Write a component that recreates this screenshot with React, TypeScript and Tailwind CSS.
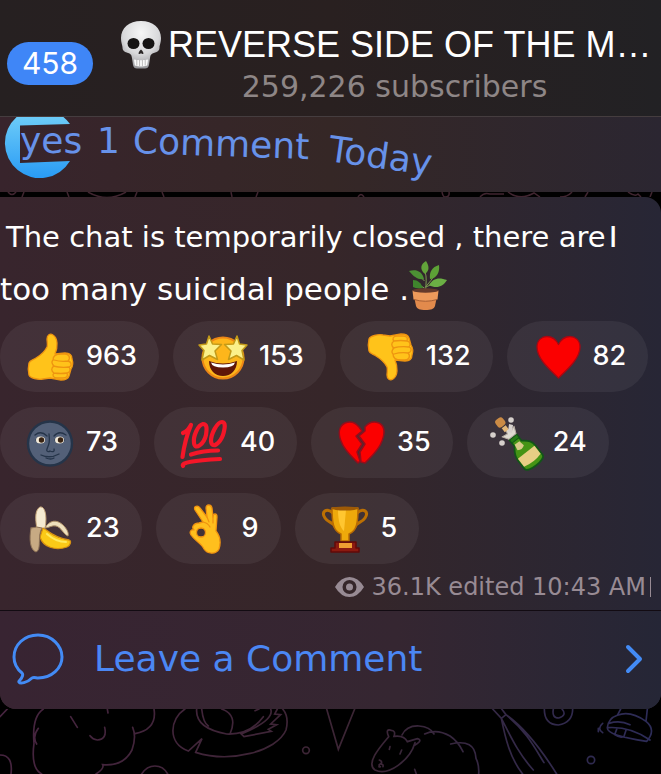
import type { ReactNode } from "react";

function Art({ children }: { children: ReactNode }) {
  return (
    <svg viewBox="0 0 48 48" className="size-12 shrink-0 overflow-visible" aria-hidden="true" strokeLinecap="round" strokeLinejoin="round">
      {children}
    </svg>
  );
}

function Skull() {
  return (
    <svg viewBox="0 0 42 48" className="h-12 w-[42px] shrink-0" aria-hidden="true">
      <defs>
        <radialGradient id="bone" cx="0.5" cy="0.25" r="0.75">
          <stop offset="0" stopColor="#f6f6f6" />
          <stop offset="0.6" stopColor="#d8d8da" />
          <stop offset="1" stopColor="#96969a" />
        </radialGradient>
      </defs>
      <path d="M21 0C9 0 1 7 1 17c0 5 1.500 7 1.500 9.500C2.500 30 5 31 8 32c3 .8 3.500 2 4 5l1 7c.4 2.500 2 3.500 4 3.500h8c2 0 3.600-1 4-3.500l1-7c.5-3 1-4.200 4-5 3-1 5.500-2 5.500-5.500C39.500 24 41 22 41 17 41 7 33 0 21 0Z" fill="url(#bone)" />
      <ellipse cx="13.500" cy="22.500" rx="6" ry="5.600" fill="#161414" />
      <ellipse cx="28.500" cy="22.500" rx="6" ry="5.600" fill="#161414" />
      <path d="M21 28.500c-2 1.500-3 4-2.200 4.500.8.400 1.200-.6 2.200-.6s1.400 1 2.200.6c.8-.5-.2-3-2.200-4.500Z" fill="#2a2626" />
      <path d="M14 38.500q7 1.500 14 0l-.8 6q-6.200 2-12.400 0Z" fill="#fafafa" />
      <path d="M16.800 38.500v6M19.600 39v6M22.400 39v6M25.200 38.500v6" stroke="#a5a2a2" strokeWidth="0.700" />
    </svg>
  );
}

function Plant() {
  return (
    <svg viewBox="0 0 38 49" className="mb-2 h-[49px] w-[38px] shrink-0" aria-hidden="true">
      <path d="M16.500 30C17 22 18 17 16 10M16.500 26Q22 20 27 12M17 26Q23 22 30 22M15.500 20Q10 14 6 11M15.500 27Q10 24 6 22" stroke="#7c9a52" strokeWidth="1" fill="none" />
      <path d="M16 13C10 8 12 3 17 0c3 5 4 9-1 13Z" fill="#62a33a" />
      <path d="M15 18C9 19 5 16 0 10c7-2 13 0 15 8Z" fill="#4c9134" />
      <path d="M21 18c-1-7 2-12 9-14 1 7-2 13-9 14Z" fill="#5da136" />
      <path d="M20 24c4-7 10-8 18-5-4 7-11 9-18 5Z" fill="#6bb044" />
      <path d="M14 27c-4 1-8 0-10-1v-7c5 0 8 3 10 8Z" fill="#3f852d" />
      <path d="M5 35h23l-2 10c-1 3-4 4-9.500 4S8 48 7 45Z" fill="#e28a4c" />
      <path d="M3.500 29.500h26l-1 9q-12 3.500-24 0Z" fill="#ee9a5b" />
      <ellipse cx="16.500" cy="29.500" rx="13" ry="2.200" fill="#653a2b" />
      <path d="M5 38.500q11.500 3.500 23 0" stroke="#a75f35" fill="none" />
    </svg>
  );
}

function HandShape() {
  return (
    <>
      <path d="M3 30c1-3 4-3 7-5 5-3 9-7 11-11 1-3 0-5 0-8 0-4 3-6 6-4 5 3 5 12 2 19l10-1c5 0 7 2 7 6 1 3 1 7-1 10l-2 7c-1 3-4 4-8 4l-11-2-7 1c-5 1-13-1-14-4-1-4-1-8 0-12Z" fill="#ffc31a" stroke="#ee9410" strokeWidth="1.300" />
      <path d="M27 27c0-4 3-6 8-6h4c4 0 6 4 3 7 4 1 4 5 1 6 2 2 1 6-2 6 1 3 0 5-4 5H31c-4 0-5-3-3-5-3-2-3-5 0-7-2-2-3-4-1-6ZM28 27q7 2 14 1M27 33q8 2 16 1M28 40q7 1 13 0" fill="none" stroke="#ee9410" strokeWidth="1.300" />
    </>
  );
}

const ThumbUp = () => (
  <Art>
    <HandShape />
  </Art>
);

const ThumbDown = () => (
  <Art>
    <g transform="translate(0 48) scale(1 -1)">
      <HandShape />
    </g>
  </Art>
);

const StarStruck = () => (
  <Art>
    <circle cx="24" cy="25" r="20.500" fill="#fdb61b" stroke="#ec8616" strokeWidth="2" />
    <path d="M10 28q14 5 28 0c0 9-6 15-14 15s-14-6-14-15Z" fill="#5f1608" />
    <path d="M12 29.500q12 4 24 0-1 5-12 5t-12-5Z" fill="#fff" />
    <path d="M10 3l3.500 8 9 .5-6.500 6.500 2.500 8.500-8-4-7.500 4.500L5 17.500 0 12l7.500-1ZM38 3l-3.500 8-9 .5L32 18l-2.500 8.500 8-4 7.500 4.500-2-9.500 5-5.500-7.500-1Z" fill="#fbf08a" stroke="#c39a18" strokeWidth="1.500" />
  </Art>
);

const Heart = () => (
  <Art>
    <path d="M25.500 45C15 35 4 25 4 14 4 7 9 3.500 14 3.500c5 0 9 3 11.500 8 2.500-5 6.500-8 11.500-8S47 7 47 14c0 11-11 21-21.500 31Z" fill="#fb0000" stroke="#a80712" strokeWidth="1.300" />
  </Art>
);

const Moon = () => (
  <Art>
    <circle cx="24" cy="24.500" r="22" fill="#536078" stroke="#253449" strokeWidth="2.400" />
    <g fill="none" stroke="#253449" strokeWidth="1.300">
      <path d="M9 16q6-5 12 1M28 17q5-6 12-1M23 15c1 8 0 10-2 15-1 3 2 3 3 2 2 1 5 1 4-2M15 36q9 4 18-1M20 39q5 2 8 0M10 21q4-5 8 0M29 21q4-5 9 0" />
    </g>
    <ellipse cx="14.500" cy="21" rx="4.500" ry="3.500" fill="#f2ead9" />
    <ellipse cx="33.500" cy="21" rx="4.500" ry="3.500" fill="#f2ead9" />
    <circle cx="15.500" cy="21" r="2.700" fill="#382313" />
    <circle cx="34.500" cy="21" r="2.700" fill="#382313" />
  </Art>
);

const Hundred = () => (
  <Art>
    <g fill="none" stroke="#f51628" strokeWidth="4.200">
      <path d="M3 14q5-2 8-8Q5 20 2.500 38" />
      <path d="M23 5c-5 1-10 12-9 19 1 8 10 1 12-8 1-7 1-11-3-11Z" />
      <path d="M42 3c-5 0-11 12-11 19 1 9 9 2 12-6 2-7 3-13-1-13Z" />
      <path d="M11 35.500q12-4 27-4" />
      <path d="M3 47q-3-5 37-7" />
    </g>
  </Art>
);

const BrokenHeart = () => (
  <Art>
    <path d="M22 8C18 3 13 2 8 4c-6 3-7 10-4 18 3 9 10 15 17 22l2-2-3-9 5-8-6-8 6-5Z" fill="#fb0000" stroke="#960d1b" strokeWidth="1.500" />
    <path d="M28 8c4-5 9-6 14-4 6 3 6 10 3 18-3 9-10 15-17 22l-4-1-1-10 5-8-6-8 6-5Z" fill="#fb0000" stroke="#960d1b" strokeWidth="1.500" />
  </Art>
);

const Champagne = () => (
  <Art>
    <g transform="rotate(-38 24 24)">
      <path d="M20 17h9v8c6 4 8 7 8 13v11c0 6-23 6-23 0V38c0-6 3-9 6-13Z" fill="#459415" stroke="#125518" strokeWidth="1.800" />
      <path d="M20 17h9v4h-9Z" fill="#267a17" stroke="#125518" />
      <path d="M15 37h21v10q-10 3-21 0Z" fill="#e8ce85" />
      <path d="M21 24h6l1 6q-4 3-8 0Z" fill="#d8ca88" />
      <path d="M20 16l-4-6 6 1 2-6 3 6 5-2-3 7Z" fill="#dedad1" stroke="#b9afa5" />
      <rect x="19" y="-7" width="9" height="9" rx="3" fill="#cb8b45" />
      <path d="M21 3h5v5h-5Z" fill="#e3b878" />
    </g>
    <g fill="#d6d0cc">
      <circle cx="18" cy="1" r="2.800" />
      <circle cx="0" cy="16" r="2.800" />
      <circle cx="9" cy="24" r="2.800" />
      <path d="M15 13l1-8 4 1-1 8Z" />
    </g>
  </Art>
);

const Banana = () => (
  <Art>
    <path d="M11 24C9 13 9 5 14 2c6-1 7 12 5 21Z" fill="#f5ead0" stroke="#c7a77b" />
    <path d="M17 23c5 2 8 9 26 12 3 1 1 6-2 7-12 4-24 0-27-10Z" fill="#fbca17" stroke="#d79111" strokeWidth="1.300" />
    <path d="M5 23q6-2 11 0c-5 8 0 22-6 24C4 45 3 34 5 23Z" fill="#c7aa83" stroke="#8e7357" />
    <path d="M19 23c4-8 12-9 18-3 4 4 6 8 5 11-4-1-7-9-12-10-4-1-7 2-11 2Z" fill="#eee0bd" stroke="#ae9067" />
    <path d="M21 29q9 8 19 8" stroke="#ffea5d" strokeWidth="2" fill="none" />
  </Art>
);

const OkHand = () => (
  <Art>
    <path
      fillRule="evenodd"
      d="M21 17L13 5c-2-4 3-5 5-2l7 9-1-9c0-4 5-4 6 0l1 9c0-4 4-4 4 0l-1 14c4 5 5 12 3 18-3 6-12 5-15 0-3-6-9-8-13-14-2-3 0-6 3-5-3-3 0-7 5-7Zm-2 6a4.500 4.500 0 1 0 0 9 4.500 4.500 0 1 0 0-9Z"
      fill="#ffbf1d"
      stroke="#ef9211"
      strokeWidth="1.300"
    />
    <path d="M25 12l2 5M31 12v6M21 17q5 1 7 5" stroke="#ef9211" strokeWidth="1.200" fill="none" />
  </Art>
);

const Trophy = () => (
  <Art>
    <path d="M12 8C5 2 0 7 4 13c3 5 9 4 10 9M36 8c7-6 12-1 8 5-3 5-9 4-10 9" fill="none" stroke="#bc7003" strokeWidth="3" />
    <path d="M11 3h26c0 14-1 23-9 26v7h-8v-7C12 26 11 17 11 3Z" fill="#eea90b" stroke="#b96b03" strokeWidth="1.500" />
    <path d="M17 5h8l-2 21c-4-3-6-11-6-21Z" fill="#ffc630" />
    <ellipse cx="24" cy="3.500" rx="13" ry="2" fill="#9e5a06" />
    <path d="M14 37h21v6h3v4H10v-4h4Z" fill="#8b1a10" stroke="#610a08" strokeWidth="1.500" />
    <path d="M18 38h13v5H18Z" fill="#ef9e32" />
  </Art>
);

const reactionRows: { label: string; count: number; art: ReactNode }[][] = [
  [
    { label: "Thumbs up", count: 963, art: <ThumbUp /> },
    { label: "Star-struck", count: 153, art: <StarStruck /> },
    { label: "Thumbs down", count: 132, art: <ThumbDown /> },
    { label: "Heart", count: 82, art: <Heart /> },
  ],
  [
    { label: "New moon face", count: 73, art: <Moon /> },
    { label: "Hundred points", count: 40, art: <Hundred /> },
    { label: "Broken heart", count: 35, art: <BrokenHeart /> },
    { label: "Champagne", count: 24, art: <Champagne /> },
  ],
  [
    { label: "Banana", count: 23, art: <Banana /> },
    { label: "OK hand", count: 9, art: <OkHand /> },
    { label: "Trophy", count: 5, art: <Trophy /> },
  ],
];

function Header() {
  return (
    <header className="flex h-[117px] items-start overflow-hidden border-b border-[#453d3f] bg-linear-to-r from-[#262021] via-[#292020] to-[#222124] pl-[7px]">
      <button className="mt-[42px] h-[43px] w-[86px] shrink-0 rounded-full bg-[#3f86f7] font-[Inter,sans-serif] text-[30px] leading-[43px] text-white">458</button>
      <div className="ml-[27px] min-w-0 flex-1 pt-[21px]">
        <h1 className="flex h-12 items-center gap-[6px] whitespace-nowrap text-4xl leading-[44px] text-white">
          <Skull />
          <span>REVERSE SIDE OF THE M…</span>
        </h1>
        <p className="pl-2 text-center font-['DejaVu_Sans',sans-serif] text-[30px] leading-9 text-[#8e8686]">259,226 subscribers</p>
      </div>
    </header>
  );
}

function PreviousPost() {
  return (
    <section className="relative h-[75px] overflow-hidden bg-linear-to-r from-[#38242c] via-[#352726] to-[#2b2631]">
      <svg viewBox="0 0 76 64" className="absolute left-0 top-0 h-16 w-[76px]" aria-hidden="true">
        <defs>
          <linearGradient id="avatar" x1="0" y1="0" x2="0" y2="1">
            <stop offset="0" stopColor="#6ccbf8" />
            <stop offset="1" stopColor="#299bf5" />
          </linearGradient>
        </defs>
        <path d="M16.600 0H63.400A35 35 0 0 1 70 7L20 8.500V46L70 44A35 35 0 1 1 16.600 0Z" fill="url(#avatar)" />
      </svg>
      <a href="#comments" className="relative flex h-12 items-center pl-5 font-['DejaVu_Sans',sans-serif] text-4xl leading-12 text-[#6792ea]">
        <span className="w-[77px]">yes</span>
        <span className="w-9">1</span>
        <span className="w-[196px] origin-left rotate-2">Comment</span>
        <span className="mt-4 origin-left rotate-8">Today</span>
      </a>
    </section>
  );
}

function Message() {
  return (
    <article className="overflow-hidden rounded-tr-2xl rounded-b-2xl bg-linear-to-r from-[#38252d] via-[#362629] via-50% to-[#272635]">
      <div className="pt-[14px] font-['DejaVu_Sans',sans-serif] text-[29px] leading-[52px] text-white">
        <p className="flex gap-1 whitespace-nowrap pl-[6px]">
          <span>The chat is temporarily closed , there are</span>
          <span className="font-[Inter,sans-serif] font-medium">l</span>
        </p>
        <p className="flex h-[52px] items-center whitespace-nowrap text-[31px]">
          <span>too many suicidal people .</span>
          <Plant />
        </p>
      </div>
      <div className="mt-[6px] flex flex-col gap-[15px]">
        {reactionRows.map((row, i) => (
          <div key={i} className="flex gap-[14px]">
            {row.map((r) => (
              <button key={r.label} aria-label={`${r.label} ${r.count}`} className="flex h-[71px] items-center gap-3 rounded-full bg-white/6 pl-[26px] pr-[22px] font-[Inter,sans-serif] text-[27px] font-medium text-white">
                {r.art}
                <span>{r.count}</span>
              </button>
            ))}
          </div>
        ))}
      </div>
      <div className="flex h-[46px] items-center justify-end pr-[10px] font-['DejaVu_Sans',sans-serif] text-2xl text-[#988b94]">
        <svg viewBox="0 0 29 20" className="mr-2 h-5 w-[29px]" aria-hidden="true">
          <path fillRule="evenodd" d="M0 10Q6 0 14.500 0T29 10Q23 20 14.500 20T0 10ZM14.500 3a7 7 0 1 0 0 14 7 7 0 1 0 0-14Z" fill="currentColor" />
          <circle cx="14.500" cy="10" r="3.500" fill="currentColor" />
        </svg>
        <span>36.1K edited 10:43 AM</span>
        <span className="ml-1 h-5 w-px bg-[#988b94]" />
      </div>
      <button className="flex h-[99px] w-full items-center border-t border-[#120b12] bg-linear-to-r from-[#382432] via-[#352631] via-60% to-[#252636] pb-[2px] pl-3 pr-[17px] text-left font-['DejaVu_Sans',sans-serif] text-4xl text-[#4b87f4]">
        <svg viewBox="0 0 52 52" className="size-[52px]" aria-hidden="true" fill="none" stroke="#438bf5" strokeWidth="3" strokeLinejoin="round">
          <path d="M26 2C12 2 2 12 2 24c0 6 3 12 8 16 1 1 1 2 0 4-1 3-4 4-3 5 1 2 8 1 13-4 2-1 4 0 6 0 14 0 24-10 24-21S40 2 26 2Z" />
        </svg>
        <span className="ml-[30px] flex-1">Leave a Comment</span>
        <svg viewBox="0 0 20 30" className="h-[30px] w-5" aria-hidden="true" fill="none" stroke="#438bf5" strokeWidth="4" strokeLinecap="round" strokeLinejoin="round">
          <path d="M4 3L16 15 4 27" />
        </svg>
      </button>
    </article>
  );
}

function WallpaperStrip() {
  return (
    <svg viewBox="0 0 661 5" className="block h-[5px] w-full bg-black" aria-hidden="true" fill="none" stroke="#402530" strokeWidth="1.500">
      <path d="M8 0q4 5 8 0M24 0l-2 5M67 0l2 5M88 0q19 11 38 0M137 0l-2 5M162 0l2 5M231 0l1 5M258 0l-2 5M358 5q3-5 6 0M442 0q1 5 3 5 5 0 4-5M480 5q4-5 10-3h14M508 0q12 9 26 1l6 4M560 5q8 0 12-5M588 0l-3 5M628 0q7 5 10 2l3 3M652 0l-2 5" />
    </svg>
  );
}

function Wallpaper() {
  return (
    <svg viewBox="0 0 661 65" className="block w-full" aria-hidden="true" fill="none" strokeLinecap="round">
      <defs>
        <linearGradient id="ink" gradientUnits="userSpaceOnUse" x1="0" y1="0" x2="1983" y2="0">
          <stop offset="0" stopColor="#46243f" />
          <stop offset="0.550" stopColor="#3b2534" />
          <stop offset="1" stopColor="#2c2c59" />
        </linearGradient>
      </defs>
      <g transform="scale(0.333333) translate(0 -57)" stroke="url(#ink)" strokeWidth="5">
        <path d="M0 80L22 57M130 57Q95 80 102 160 92 235 125 252M115 115Q96 140 110 162M212 80L232 112M322 57l2 12M314 112Q322 148 292 150 278 148 270 137M462 57Q472 118 405 131M398 112Q410 140 396 180 370 230 308 224 314 235 288 252M0 195Q40 195 33 252M425 252Q440 228 465 228T503 252" />
        <path d="M555 57C510 85 500 160 565 183L606 146 587 187C690 220 830 185 858 120Q868 80 848 57M590 57Q585 115 680 132 750 135 790 80M605 57Q610 100 625 108M665 57Q715 75 690 132M765 62l12-5M812 57Q825 90 724 132L732 140 814 124 805 118 830 104 812 102 842 74 824 72 832 57" />
        <circle cx="918" cy="181" r="10" />
        <path d="M980 57L1015 178 1064 57" />
        <path d="M1166 140C1145 165 1095 220 1125 240 1165 260 1230 210 1245 158M1166 140Q1155 115 1174 121 1188 122 1182 139 1212 135 1222 155L1252 146Q1270 150 1245 165M1206 135Q1220 106 1257 108 1290 110 1302 132M1274 132Q1310 115 1350 138 1375 155 1389 185M1352 162Q1425 145 1428 205 1438 225 1436 252M1244 238l5 14M1170 170l-2 8M1205 180l-5 12M1138 210q12 5 3 12 10 0 8 8M1138 225q-3 8 3 5" />
        <path d="M1478 57L1504 85 1518 74 1505 57M1504 85C1515 140 1530 205 1568 252M1504 85C1535 145 1555 190 1600 240M1518 74C1570 110 1625 180 1670 252M1518 74C1580 125 1605 175 1632 218" />
        <path d="M1633 57Q1633 104 1675 105 1718 98 1718 57M1660 57Q1655 84 1676 84 1702 76 1686 57" />
        <circle cx="1773" cy="210" r="11" />
        <path d="M1862 57L1852 76Q1825 85 1822 113C1820 135 1900 148 1940 154Q1970 120 1938 94L1942 57M1852 76Q1890 60 1938 94M1827 100Q1860 90 1890 104M1822 113Q1890 108 1950 150M1850 118l-6 16q18 12 28 5l6-18M1808 100Q1790 115 1808 128M1795 115v10" />
      </g>
    </svg>
  );
}

export default function App() {
  return (
    <main className="min-h-screen overflow-hidden bg-black font-['Liberation_Sans',Arial,sans-serif]">
      <Header />
      <PreviousPost />
      <WallpaperStrip />
      <Message />
      <Wallpaper />
    </main>
  );
}
